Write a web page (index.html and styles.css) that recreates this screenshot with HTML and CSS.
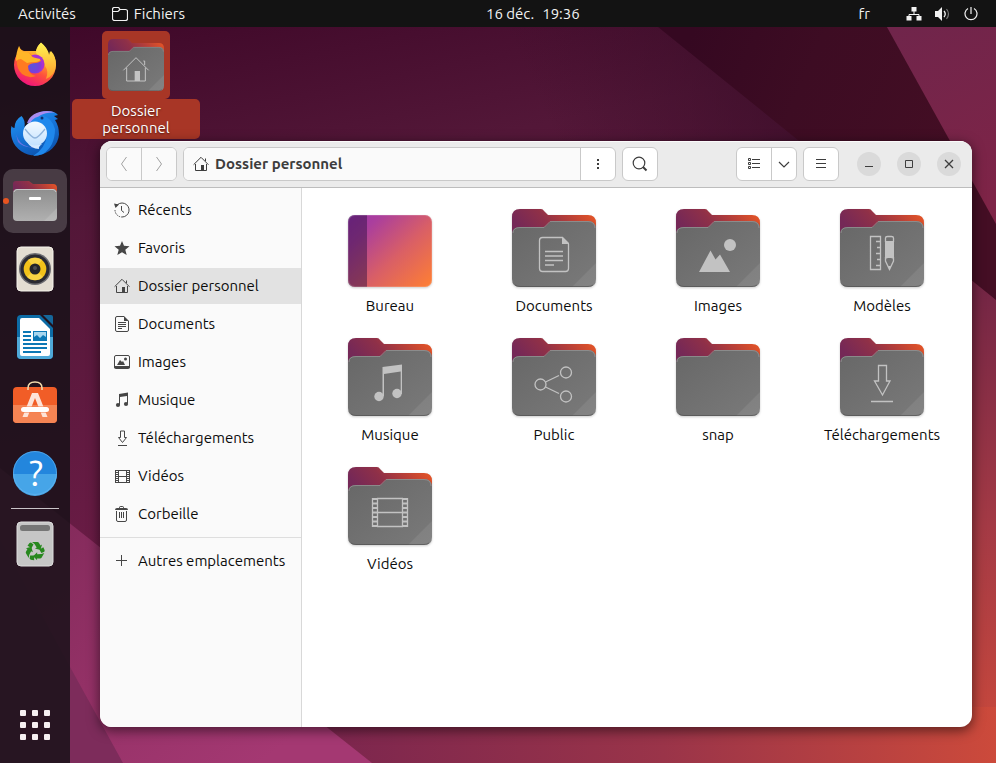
FILE: index.html
```html
<!DOCTYPE html>
<html lang="fr">
<head>
<meta charset="utf-8">
<meta name="viewport" content="width=device-width, initial-scale=1">
<title>Dossier personnel</title>
<link rel="stylesheet" href="styles.css">
</head>
<body>
<svg class="wallpaper" viewBox="0 0 996 763" preserveAspectRatio="xMidYMid slice" aria-hidden="true">
  <defs>
    <linearGradient id="w-base" gradientUnits="userSpaceOnUse" x1="70" y1="27" x2="180" y2="560"><stop offset="0" stop-color="#3f0829"/><stop offset=".35" stop-color="#531738"/><stop offset="1" stop-color="#6b1c46"/></linearGradient>
    <linearGradient id="w-shade" gradientUnits="userSpaceOnUse" x1="560" y1="150" x2="760" y2="60"><stop offset="0" stop-color="#3a0d28" stop-opacity="0"/><stop offset="1" stop-color="#3a0d28" stop-opacity=".7"/></linearGradient>
    <linearGradient id="w-low" gradientUnits="userSpaceOnUse" x1="330" y1="763" x2="996" y2="763"><stop offset="0" stop-color="#7c264e"/><stop offset=".5" stop-color="#9a3449"/><stop offset="1" stop-color="#cc4a3b"/></linearGradient>
    <linearGradient id="w-right" gradientUnits="userSpaceOnUse" x1="0" y1="290" x2="0" y2="763"><stop offset="0" stop-color="#742645"/><stop offset=".5" stop-color="#a43a45"/><stop offset="1" stop-color="#cc4a3b"/></linearGradient>
    <linearGradient id="w-dark" gradientUnits="userSpaceOnUse" x1="680" y1="60" x2="960" y2="180"><stop offset="0" stop-color="#350821"/><stop offset=".4" stop-color="#3d0c23"/><stop offset="1" stop-color="#440e24"/></linearGradient>
    <linearGradient id="w-pink" gradientUnits="userSpaceOnUse" x1="70" y1="520" x2="260" y2="763"><stop offset="0" stop-color="#852b5c"/><stop offset="1" stop-color="#a43872"/></linearGradient>
    <linearGradient id="w-corner" gradientUnits="userSpaceOnUse" x1="900" y1="27" x2="990" y2="200"><stop offset="0" stop-color="#70254b"/><stop offset="1" stop-color="#7e2447"/></linearGradient>
  </defs>
  <path fill="url(#w-base)" d="M0 0h996v763H0z"/>
  <path fill="url(#w-shade)" d="M300 0h600v200H300z"/>
  <path fill="url(#w-right)" d="M900 220l96 77v466h-96z"/>
  <path fill="url(#w-low)" d="M300 707h696v56H300z"/>
  <path fill="url(#w-dark)" d="M624 0h372v300L658 27z"/>
  <path fill="url(#w-corner)" d="M872 0h124v224z"/>
  <path fill="url(#w-pink)" d="M0 468l372 295H0z"/>
  <path fill="#7d2c5b" d="M0 540l123 223H0z"/>
</svg>

<svg class="defs" aria-hidden="true">
  <defs>
    <linearGradient id="f-back" x1="0" y1=".3" x2="1" y2="0"><stop offset="0" stop-color="#752857"/><stop offset=".35" stop-color="#8f3048"/><stop offset=".65" stop-color="#bb4137"/><stop offset="1" stop-color="#f05a22"/></linearGradient>
    <linearGradient id="f-front" x1="0" y1="0" x2="1" y2="1"><stop offset="0" stop-color="#676767"/><stop offset="1" stop-color="#7a7a7a"/></linearGradient>
    <linearGradient id="f-light" x1="0" y1="0" x2="0" y2="1"><stop offset="0" stop-color="#8e8e8e"/><stop offset="1" stop-color="#b0b0b0"/></linearGradient>
    <linearGradient id="desk" x1="0" y1="0" x2="1" y2=".9"><stop offset="0" stop-color="#9c34ae"/><stop offset=".22" stop-color="#ab3f9c"/><stop offset=".6" stop-color="#d95f66"/><stop offset="1" stop-color="#fb7c38"/></linearGradient>
    <symbol id="folder" viewBox="0 0 84 78">
      <path fill="url(#f-back)" d="M0 30V8Q0 0 8 0H29Q31 0 32 2L36 6H76Q84 6 84 14V30z"/>
      <path fill="url(#f-front)" d="M0 25Q0 18 8 18H31Q33 18 34 17L38 13Q39 12 41 12H76Q84 12 84 20V70Q84 78 76 78H8Q0 78 0 70z"/>
      <path fill="none" stroke="#999" stroke-opacity=".7" d="M1 24Q1 18.500 8 18.500H32L38 12.500H76Q83 12.500 83 19"/>
      <path fill="#fff" fill-opacity=".08" d="M60 78L84 54V70Q84 78 76 78z"/>
      <path fill="none" stroke="#4c4c4c" stroke-opacity=".6" d="M3 76Q5 77.500 8 77.500H76Q79 77.500 81 76"/>
    </symbol>
    <symbol id="s-home" viewBox="0 0 16 16"><path fill="none" stroke="currentColor" d="M.6 8.700L8 1.300l7.400 7.400M2.500 8v6.500h11V8M12.500 5V2.500"/><path fill="currentColor" d="M8 9h3v6H8z"/></symbol>
    <symbol id="s-doc" viewBox="0 0 16 16"><path fill="none" stroke="currentColor" d="M10 .5H3A1.500 1.500 0 0 0 1.500 2v12A1.500 1.500 0 0 0 3 15.500h10a1.500 1.500 0 0 0 1.500-1.500V5M4 6.500h8M4 8.500h8M4 10.500h8M4 12.500h4"/><path fill="currentColor" d="M10 0l5 5h-5z"/></symbol>
    <symbol id="s-image" viewBox="0 0 16 16"><path fill="none" stroke="currentColor" d="M2 1.500h12A1.500 1.500 0 0 1 15.500 3v10.500H.5V3A1.500 1.500 0 0 1 2 1.500z"/><path fill="currentColor" d="M0 12h16v1a2 2 0 0 1-2 2H2a2 2 0 0 1-2-2zM3 11l3-5 2 2 1-1 2 4zM10 5a1.500 1.500 0 1 0 3 0 1.500 1.500 0 0 0-3 0"/></symbol>
    <symbol id="s-music" viewBox="0 0 16 16"><path fill="currentColor" d="M5 2l9-1.500v11h-1V4L6 5v8H5z"/><circle fill="currentColor" cx="4" cy="13" r="2.100"/><circle fill="currentColor" cx="12" cy="12" r="2.100"/></symbol>
    <symbol id="s-down" viewBox="0 0 16 16"><path fill="none" stroke="currentColor" d="M6.500 1h4v6.500h2l-4 5-4-5h2zM4 15.500h9"/></symbol>
    <symbol id="s-video" viewBox="0 0 16 16"><path fill="none" stroke="currentColor" d="M1.500 2v13M4.500 2v13M12.500 2v13M15.500 2v13M4 2.500h9M4 8.500h9M4 14.500h9"/><path stroke="currentColor" stroke-width="3" stroke-dasharray="1 1" d="M3 2v13M14 2v13" fill="none"/></symbol>
  </defs>
</svg>

<header class="topbar">
  <div class="topbar-left">
    <button class="top-button" type="button">Activités</button>
    <button class="top-button app-menu" type="button">
      <svg width="16" height="14" viewBox="0 0 16 14" fill="none" stroke="currentColor" aria-hidden="true"><path d="M2 .5h4Q7 .5 7.500 2L8 2.500h5.500a2 2 0 0 1 2 2v7a2 2 0 0 1-2 2h-11a2 2 0 0 1-2-2V2.500A2 2 0 0 1 2 .5zM.5 4.500H6L8 2.500" stroke-width="1.200"/></svg>
      Fichiers
    </button>
  </div>
  <button class="top-button clock" type="button"><span>16 déc.</span><span>19:36</span></button>
  <div class="topbar-right">
    <button class="top-button" type="button">fr</button>
    <button class="top-button status" type="button" aria-label="Système">
      <svg width="16" height="14" viewBox="0 0 16 14" aria-hidden="true"><path fill="none" stroke="currentColor" d="M8 4v3.500M3 10V7.500h10V10"/><path fill="currentColor" d="M5.500 0h5v4.500h-5zM.5 9h5v4.500h-5zM10.500 9h5v4.500h-5z"/></svg>
      <svg width="16" height="14" viewBox="0 0 16 14" aria-hidden="true"><path fill="currentColor" d="M0 4h3l4-4v14l-4-4H0z"/><path fill="none" stroke="currentColor" stroke-width="1.300" d="M9 4q2.500 3 0 6"/><path fill="none" stroke="currentColor" stroke-opacity=".45" stroke-width="1.200" d="M11.500 2q4 5 0 10"/></svg>
      <svg width="14" height="14" viewBox="0 0 14 14" aria-hidden="true"><path fill="none" stroke="currentColor" stroke-width="1.200" d="M7 0v7M4 1.500a6 6 0 1 0 6 0"/></svg>
    </button>
  </div>
</header>

<div class="desktop">
  <nav class="dock" aria-label="Dock">
    <button class="dock-item" type="button" aria-label="Firefox">
      <svg viewBox="0 0 64 64" aria-hidden="true">
        <defs>
          <linearGradient id="ff1" x1=".8" y1="0" x2=".3" y2="1"><stop offset="0" stop-color="#fff04a"/><stop offset=".35" stop-color="#ffa92c"/><stop offset=".65" stop-color="#ff503c"/><stop offset="1" stop-color="#ee1080"/></linearGradient>
          <linearGradient id="ff2" x1="0" y1="0" x2="0" y2="1"><stop offset="0" stop-color="#fff453"/><stop offset="1" stop-color="#ff9a2a"/></linearGradient>
          <radialGradient id="ff3" cx=".4" cy=".6"><stop offset="0" stop-color="#5a54dc"/><stop offset=".7" stop-color="#7b3fd8"/><stop offset="1" stop-color="#aa31d2"/></radialGradient>
        </defs>
        <path fill="url(#ff1)" d="M16 13q1 4 5 5l5 0Q29 18 33 18 34 13 38 10q7 6 8 13 2-1 2-5 5 5 5 14A21 21 0 0 1 11 32Q11 24 16 19z"/>
        <path fill="url(#ff2)" d="M38 9.500Q45 15 46 22l1-4q6 6 6 14-1 10-10 14 3-8-1-13-1-6-9-13 0-6 5-10.500z"/>
        <circle cx="32" cy="31" r="9.500" fill="url(#ff3)"/>
        <path fill="#ff7a22" d="M16 19q3 0 6 1 5-1 7 3l3 3 6 1q0 2-5 3-6 0-8 3 0 8 8 10-7 3-14-2-6-6-5-14z"/>
        <path fill="#ffb628" d="M16 13q1 5 6 6 5 0 7 5l8 2q1 2-4 3-6 0-9 1l-6-4q-3 0-5 2 0-9 3-15z"/>
      </svg>
    </button>
    <button class="dock-item" type="button" aria-label="Thunderbird">
      <svg viewBox="0 0 64 64" aria-hidden="true">
        <defs>
          <linearGradient id="tb1" x1="0" y1="0" x2=".5" y2="1"><stop offset="0" stop-color="#249cf4"/><stop offset=".5" stop-color="#1878dc"/><stop offset="1" stop-color="#0d56b2"/></linearGradient>
          <linearGradient id="tb2" x1="0" y1="0" x2="0" y2="1"><stop offset="0" stop-color="#f4faff"/><stop offset="1" stop-color="#c4e2ff"/></linearGradient>
        </defs>
        <path fill="url(#tb1)" d="M8.500 25q1 2 3 2 0-8 7-12 4 4 3 11l5-5Q30 10.500 44 10q8 0 11 4l-4 1 4 3-3 1q4 6 4 14.500A24 22.500 0 0 1 9 38Q7 31 8.500 25z"/>
        <path fill="#a98cf0" d="M24 22Q28 10.500 44 10q5 0 8 1.500-9-.5-15 3-4 3-6 7z"/>
        <path fill="#1f88ec" d="M27 22q4-7 13-7 9 2 12 13 0 17-12 25-5 2-10 2 13-8 14-22-2-10-17-11z"/>
        <path fill="#6c74e4" d="M13 33q3 11 13 13h9q-14 2-20-5z"/>
        <path fill="#d6eaff" d="M24 41q8 3 15 2-4 3-3 5-8 0-12-7z"/>
        <circle cx="32" cy="32.500" r="12" fill="url(#tb2)"/>
        <path fill="none" stroke="#8fb4dd" stroke-width="1.300" d="M22 28q7 9 10 9t10-9"/>
        <circle cx="39" cy="17" r="1.500" fill="#102f70"/>
      </svg>
    </button>
    <button class="dock-item active" type="button" aria-label="Fichiers">
      <svg viewBox="0 0 64 64" aria-hidden="true">
        <path fill="url(#f-back)" d="M10 26V15q0-3 3-3h13l4 3h20q4 0 4 4v7z"/>
        <rect x="10" y="20" width="44" height="32" rx="4" fill="url(#f-light)"/>
        <path fill="none" stroke="#c9c9c9" d="M11 23q1-2.500 3-2.500h36q2 0 3 2.500"/>
        <path fill="#fff" fill-opacity=".12" d="M41 52l13-13v9q0 4-4 4z"/>
        <rect x="26" y="28" width="12" height="3" rx="1" fill="#fff"/>
      </svg>
    </button>
    <button class="dock-item" type="button" aria-label="Rhythmbox">
      <svg viewBox="0 0 64 64" aria-hidden="true">
        <rect x="14" y="10" width="36" height="44" rx="4" fill="#e3ddd2" stroke="#f6f3ec"/>
        <circle cx="32" cy="32" r="16" fill="#6b6b70"/><circle cx="32" cy="32" r="14.500" fill="#2a2a32"/>
        <circle cx="32" cy="32" r="11.300" fill="#f2c21a"/><path fill="#ffdf61" fill-opacity=".6" d="M32 32L24 40a11.300 11.300 0 0 0 16 0zM32 32l-7-9a11.300 11.300 0 0 1 14 0z"/>
        <circle cx="32" cy="32" r="5.500" fill="#25252a"/><circle cx="32" cy="31" r="2" fill="#4d4d52"/>
      </svg>
    </button>
    <button class="dock-item" type="button" aria-label="LibreOffice Writer">
      <svg viewBox="0 0 64 64" aria-hidden="true">
        <path fill="#0d6ca6" d="M18 10h19l13 13v27q0 4-4 4H18q-4 0-4-4V14q0-4 4-4z"/>
        <path fill="#4fa9d8" d="M14 32h36v18q0 4-4 4H18q-4 0-4-4z"/>
        <path fill="#fff" d="M19 13h17l11 11v25q0 2-2 2H19q-2 0-2-2V15q0-2 2-2z"/>
        <path fill="#15679b" d="M40 10h8q2 0 2 2v8z"/>
        <path stroke="#0d78b5" stroke-width="2" d="M20 27h8M20 31h8M20 35h8M20 39h24M20 43h24M20 47h18"/>
        <rect x="30.500" y="26.500" width="13" height="9" fill="#a8d6ee" stroke="#0d78b5"/>
        <path fill="#0d78b5" d="M31 35v-3l3-2 3 3 3-3 3 2v3z"/>
      </svg>
    </button>
    <button class="dock-item" type="button" aria-label="Ubuntu Software">
      <svg viewBox="0 0 64 64" aria-hidden="true">
        <rect x="10" y="14" width="44" height="36" rx="4" fill="#f15d27"/>
        <path fill="#f58454" d="M10 32h44v14q0 4-4 4H14q-4 0-4-4z"/>
        <path fill="none" stroke="#f3dcae" stroke-width="1.500" d="M25 17v-2q0-6 7-6t7 6v2"/>
        <path fill="#fde3d8" d="M29 20h6l9.500 24h-5L32 25l-7.500 19h-5z"/>
        <rect x="17.500" y="33.500" width="29" height="6" rx="3" fill="#f47a48"/>
        <rect x="18" y="34" width="28" height="5" rx="2.500" fill="#fff"/>
      </svg>
    </button>
    <button class="dock-item" type="button" aria-label="Aide">
      <svg viewBox="0 0 64 64" aria-hidden="true">
        <circle cx="32" cy="32" r="22" fill="#2386dd"/><path fill="#46a5e8" d="M10 33h44a22 22 0 0 1-44 0z"/>
        <circle cx="32" cy="32" r="21.500" fill="none" stroke="#6bb8f0" stroke-opacity=".6"/>
        <text class="help-mark" x="33" y="45" text-anchor="middle">?</text>
      </svg>
    </button>
    <hr class="dock-separator">
    <button class="dock-item" type="button" aria-label="Corbeille">
      <svg viewBox="0 0 64 64" aria-hidden="true">
        <defs><path id="recycle" d="M-3-9h5.500q1 0 1.500 1l1.500 2.500L7-6.500 5.500-1 0-2.500l1.700-1L-.5-7zM-4-8.500L-1.500-6.500-3.500-3-7.500-5.300-5.500-8z"/></defs>
        <rect x="14" y="10" width="36" height="44" rx="4" fill="#c6c6c6" stroke="#dedede"/>
        <rect x="17" y="13" width="30" height="6" rx="2.500" fill="#767676"/>
        <g fill="#27881e"><use href="#recycle" transform="translate(32 39)"/><use href="#recycle" transform="translate(32 39) rotate(120)"/><use href="#recycle" transform="translate(32 39) rotate(240)"/></g>
      </svg>
    </button>
    <button class="dock-item apps" type="button" aria-label="Afficher les applications">
      <svg viewBox="0 0 64 64" aria-hidden="true"><g fill="#f4f1f2"><rect x="17" y="17" width="6" height="6" rx="1"/><rect x="29" y="17" width="6" height="6" rx="1"/><rect x="41" y="17" width="6" height="6" rx="1"/><rect x="17" y="29" width="6" height="6" rx="1"/><rect x="29" y="29" width="6" height="6" rx="1"/><rect x="41" y="29" width="6" height="6" rx="1"/><rect x="17" y="41" width="6" height="6" rx="1"/><rect x="29" y="41" width="6" height="6" rx="1"/><rect x="41" y="41" width="6" height="6" rx="1"/></g></svg>
    </button>
  </nav>

  <main class="workspace">
    <a class="desktop-icon" href="#">
      <span class="desktop-thumb"><svg width="56" height="52" viewBox="0 0 84 78" aria-hidden="true"><use href="#folder" width="84" height="78"/><g fill="none" stroke="#c4c4c4" stroke-width="1.500"><path d="M23 47l19-19 19 19M28 43v20h28V43M55 39v-6h-2"/></g><path fill="#c4c4c4" d="M40 48h8v15h-8z"/></svg></span>
      <span class="desktop-label">Dossier personnel</span>
    </a>

    <section class="window" aria-label="Dossier personnel">
      <header class="headerbar">
        <div class="group">
          <button type="button" disabled aria-label="Précédent"><svg width="16" height="16" viewBox="0 0 16 16" fill="none" stroke="currentColor"><path d="M10.500 1L5.500 8l5 7"/></svg></button>
          <button type="button" disabled aria-label="Suivant"><svg width="16" height="16" viewBox="0 0 16 16" fill="none" stroke="currentColor"><path d="M5.500 1l5 7-5 7"/></svg></button>
        </div>
        <div class="group pathbar">
          <button class="path" type="button"><svg width="16" height="16"><use href="#s-home"/></svg>Dossier personnel</button>
          <button type="button" aria-label="Menu du dossier"><svg width="16" height="16" viewBox="0 0 16 16" fill="currentColor"><path d="M7 3h2v2H7zM7 7h2v2H7zM7 11h2v2H7z"/></svg></button>
        </div>
        <div class="group"><button type="button" aria-label="Rechercher"><svg width="16" height="16" viewBox="0 0 16 16" fill="none" stroke="currentColor"><circle cx="7" cy="7" r="5.800" stroke-width="1.200"/><path stroke-width="2" d="M11 11l3.500 3.500"/></svg></button></div>
        <div class="group view">
          <button type="button" aria-label="Affichage"><svg width="16" height="16" viewBox="0 0 16 16" fill="none" stroke="currentColor"><path d="M2.500 2.500h2v2h-2zM2.500 6.500h2v2h-2zM2.500 10.500h2v2h-2zM6 3.500h8M6 7.500h8M6 11.500h8"/></svg></button>
          <button class="narrow" type="button" aria-label="Options d’affichage"><svg width="16" height="16" viewBox="0 0 16 16" fill="none" stroke="currentColor"><path stroke-width="1.200" d="M3 6l5 5 5-5"/></svg></button>
        </div>
        <div class="group"><button type="button" aria-label="Menu"><svg width="16" height="16" viewBox="0 0 16 16" fill="none" stroke="currentColor"><path d="M3 3.500h10M3 7.500h10M3 11.500h10"/></svg></button></div>
        <div class="controls">
          <button type="button" aria-label="Réduire"><svg width="16" height="16" viewBox="0 0 16 16" stroke="currentColor"><path d="M4 10.500h8"/></svg></button>
          <button type="button" aria-label="Agrandir"><svg width="16" height="16" viewBox="0 0 16 16" fill="none" stroke="currentColor"><path d="M4.500 4.500h7v7h-7z"/></svg></button>
          <button type="button" aria-label="Fermer"><svg width="16" height="16" viewBox="0 0 16 16" stroke="currentColor"><path stroke-width="1.300" d="M4 4l8 8M12 4l-8 8"/></svg></button>
        </div>
      </header>

      <div class="window-body">
        <nav class="sidebar" aria-label="Emplacements">
          <a href="#"><svg viewBox="0 0 16 16" fill="none" stroke="currentColor"><path d="M2 4.500A7 7 0 1 1 8 15" /><path stroke-dasharray="1.500 1" d="M1 8a7 7 0 0 0 7 7"/><path d="M7.500 4v4.500l2.500 2"/><path fill="currentColor" stroke="none" d="M0 1.500l5 1-3.500 3.500z"/></svg>Récents</a>
          <a href="#"><svg viewBox="0 0 16 16"><path fill="currentColor" d="M8 1l2 4.800 5.500.4-4.200 3.500 1.400 5.300L8 12.200 3.300 15l1.400-5.300L.5 6.200 6 5.800z"/></svg>Favoris</a>
          <a href="#" class="selected" aria-current="page"><svg><use href="#s-home"/></svg>Dossier personnel</a>
          <a href="#"><svg><use href="#s-doc"/></svg>Documents</a>
          <a href="#"><svg><use href="#s-image"/></svg>Images</a>
          <a href="#"><svg><use href="#s-music"/></svg>Musique</a>
          <a href="#"><svg><use href="#s-down"/></svg>Téléchargements</a>
          <a href="#"><svg><use href="#s-video"/></svg>Vidéos</a>
          <a href="#"><svg viewBox="0 0 16 16" fill="none" stroke="currentColor"><path d="M2.500 5v9a1.500 1.500 0 0 0 1.500 1.500h7a1.500 1.500 0 0 0 1.500-1.500V5M5.500 6v6M7.500 6v6M9.500 6v6"/><path fill="currentColor" stroke="none" d="M1 4q0-2 2-2h2q0-2 2-2h1q2 0 2 2h2q2 0 2 2zM6 2h3V1H6z"/></svg>Corbeille</a>
          <hr>
          <a href="#"><svg viewBox="0 0 16 16" stroke="currentColor"><path d="M2 7.500h11M7.500 2v11"/></svg>Autres emplacements</a>
        </nav>

        <div class="files">
          <a class="file" href="#"><svg viewBox="0 0 84 78"><rect y="6" width="84" height="72" rx="7" fill="url(#desk)"/><path fill="#260b3c" fill-opacity=".45" d="M7 6h12v72H7q-7 0-7-7V13q0-7 7-7z"/><rect x=".5" y="6.500" width="83" height="71" rx="6.500" fill="none" stroke="#fff" stroke-opacity=".15"/></svg>Bureau</a>
          <a class="file" href="#"><svg viewBox="0 0 84 78"><use href="#folder"/><g class="line"><path d="M51 28.500H30.500a3 3 0 0 0-3 3v28a3 3 0 0 0 3 3h23a3 3 0 0 0 3-3V35M33 42.500h18M33 47h18M33 51.500h18M33 56h9"/></g><path class="solid" d="M50 28h1l6 6v1h-7z"/></svg>Documents</a>
          <a class="file" href="#"><svg viewBox="0 0 84 78"><use href="#folder"/><g class="solid"><circle cx="54" cy="36" r="6"/><path d="M23 63l11.500-21.500 5 9 4.500-5L54 63z"/></g></svg>Images</a>
          <a class="file" href="#"><svg viewBox="0 0 84 78"><use href="#folder"/><path class="line" d="M30.500 27.500h10v33h-10zM40 32.500h-4M40 38.500h-3M40 44.500h-4M40 50.500h-3M40 56.500h-4M45.500 33V29q0-1.500 2-1.500h4q2 0 2 1.500v4M45.500 48v4l4 8.500 4-8.500v-4"/><path class="solid" d="M45 32h9v18l-3-1H48l-3 1zM48 57h3l-1.500 4z"/></svg>Modèles</a>
          <a class="file" href="#"><svg viewBox="0 0 84 78"><use href="#folder"/><g class="solid"><circle cx="31" cy="58.500" r="4.700"/><circle cx="49" cy="55.500" r="4.700"/><path d="M34.500 29L54 26.500V56h-1.300V33.500L36 36v22h-1.500z"/></g></svg>Musique</a>
          <a class="file" href="#"><svg viewBox="0 0 84 78"><use href="#folder"/><g class="line"><circle cx="28.500" cy="46.500" r="5.500"/><circle cx="54" cy="34.500" r="5.500"/><circle cx="54" cy="58.500" r="5.500"/><path d="M33.500 44L47 37.500M33.500 49L47 55.500"/></g></svg>Public</a>
          <a class="file" href="#"><svg viewBox="0 0 84 78"><use href="#folder"/></svg>snap</a>
          <a class="file" href="#"><svg viewBox="0 0 84 78"><use href="#folder"/><path class="line" d="M38.500 27.500h8V43H50L42.500 57 34.500 43h4zM31 63.500h22"/></svg>Téléchargements</a>
          <a class="file" href="#"><svg viewBox="0 0 84 78"><use href="#folder"/><path class="line" d="M24.500 31v29M29.500 31v29M54.500 31v29M59.500 31v29M29 31.500h26M29 45.500h26M29 59.500h26"/><path class="line perforations" d="M27 31v29M57 31v29"/></svg>Vidéos</a>
        </div>
      </div>
    </section>
  </main>
</div>
</body>
</html>
```
FILE: styles.css
```css
* {
  box-sizing: border-box;
}

body {
  margin: 0;
  min-height: 100vh;
  display: flex;
  flex-direction: column;
  font-family: Ubuntu, "Noto Sans", sans-serif;
  font-size: 15px;
  line-height: 20px;
  color: #0c0c0c;
  background: #531738;
}

button {
  font: inherit;
  color: inherit;
  padding: 0;
  border: 0;
  background: none;
}

a {
  color: inherit;
  text-decoration: none;
}

svg {
  display: block;
  flex: none;
}

.defs {
  position: absolute;
  width: 0;
  height: 0;
}

.wallpaper {
  position: absolute;
  inset: 0;
  width: 100%;
  height: 100%;
  z-index: -1;
}

/* Top bar */
.topbar {
  display: flex;
  justify-content: space-between;
  height: 27px;
  padding: 0 18px;
  background: #131313;
  color: #f2f2f2;
}

.topbar-left,
.topbar-right,
.top-button {
  display: flex;
  align-items: center;
}

.topbar-left,
.topbar-right {
  gap: 36px;
}

.app-menu {
  gap: 6px;
}

.clock {
  gap: 8px;
  padding-left: 22px;
}

.status {
  gap: 13px;
}

/* Dock */
.desktop {
  flex: 1;
  display: flex;
}

.dock {
  flex: none;
  width: 70px;
  padding: 4px 3px;
  display: flex;
  flex-direction: column;
  background: rgba(24, 18, 24, 0.86);
}

.dock-item {
  position: relative;
  width: 64px;
  height: 64px;
  margin: 2px 0;
  border-radius: 10px;
}

.dock-item svg {
  width: 64px;
  height: 64px;
}

.dock-item.active {
  background: rgba(255, 255, 255, 0.18);
}

.dock-item.active::before {
  content: "";
  position: absolute;
  left: 0;
  top: 29px;
  width: 6px;
  height: 6px;
  border-radius: 50%;
  background: #e95420;
}

.dock-separator {
  width: 48px;
  height: 1px;
  margin: 1px auto;
  border: 0;
  background: #c9c4c8;
}

.apps {
  margin-top: auto;
}

.help-mark {
  font-family: Ubuntu, "Noto Sans", sans-serif;
  font-size: 36px;
  fill: #fff;
}

/* Workspace */
.workspace {
  flex: 1;
  min-width: 0;
  display: flex;
  flex-direction: column;
  align-items: flex-start;
  padding: 4px 24px 36px 2px;
}

.desktop-icon {
  width: 128px;
  display: flex;
  flex-direction: column;
  align-items: center;
  color: #fff;
  text-align: center;
  line-height: 17px;
}

.desktop-thumb {
  width: 68px;
  height: 68px;
  padding: 8px 6px;
  border-radius: 5px;
  background: #a83626;
}

.desktop-label {
  width: 100%;
  padding: 3px 28px;
  border-radius: 5px;
  background: #a83626;
  text-shadow: 0 1px 2px rgba(0, 0, 0, 0.5);
}

.window {
  flex: 1;
  align-self: stretch;
  margin: 2px 0 0 28px;
  display: flex;
  flex-direction: column;
  overflow: hidden;
  border-radius: 12px;
  background: #fff;
  box-shadow: 0 3px 12px 1px rgba(0, 0, 0, 0.5);
}

.headerbar {
  display: flex;
  align-items: center;
  gap: 6px;
  height: 47px;
  padding: 0 11px 0 6px;
  background: #ebebeb;
  border-bottom: 1px solid #bdbdbd;
  box-shadow: inset 0 1px #fafafa;
  color: #3d3d3d;
}

.group {
  display: flex;
  height: 34px;
  border: 1px solid #c9c9c9;
  border-radius: 6px;
  background: #fff;
  overflow: hidden;
}

.group button {
  width: 34px;
  display: flex;
  align-items: center;
  justify-content: center;
}

.group button + button {
  width: 35px;
  border-left: 1px solid #c9c9c9;
}

.group button:disabled {
  color: #a0a0a0;
  background: #fafafa;
}

.group button.narrow {
  width: 25px;
}

.pathbar {
  flex: 1;
}

.group .path {
  flex: 1;
  justify-content: flex-start;
  gap: 6px;
  padding-left: 9px;
  background: #fafafa;
  font-weight: 700;
}

.view {
  margin-left: 72px;
}

.controls {
  display: flex;
  gap: 16px;
  margin-left: 12px;
}

.controls button {
  width: 24px;
  height: 24px;
  display: flex;
  align-items: center;
  justify-content: center;
  border-radius: 50%;
  background: #dadada;
}

.window-body {
  flex: 1;
  display: flex;
}

.sidebar {
  flex: none;
  width: 202px;
  padding-top: 4px;
  display: flex;
  flex-direction: column;
  gap: 2px;
  background: #fafafa;
  border-right: 1px solid #d8d8d8;
}

.sidebar a {
  display: flex;
  align-items: center;
  gap: 8px;
  height: 36px;
  padding-left: 14px;
  white-space: nowrap;
}

.sidebar svg {
  width: 16px;
  height: 16px;
  color: #464646;
}

.sidebar .selected {
  background: #e2e2e2;
}

.sidebar hr {
  width: 100%;
  height: 1px;
  margin: 3px 0;
  border: 0;
  background: #dedede;
}

.files {
  flex: 1;
  display: grid;
  grid-template-columns: repeat(4, 1fr);
  align-content: start;
  row-gap: 22px;
  padding: 21px 8px 21px 6px;
}

.file {
  display: flex;
  flex-direction: column;
  align-items: center;
  gap: 9px;
}

.file svg {
  width: 84px;
  height: 78px;
  filter: drop-shadow(0 1px 1px rgba(0, 0, 0, 0.2));
}

.line {
  fill: none;
  stroke: #c2c2c2;
  stroke-width: 1.3;
}

.perforations {
  stroke-width: 5;
  stroke-dasharray: 2 2.5;
}

.solid {
  fill: #c2c2c2;
}
```
